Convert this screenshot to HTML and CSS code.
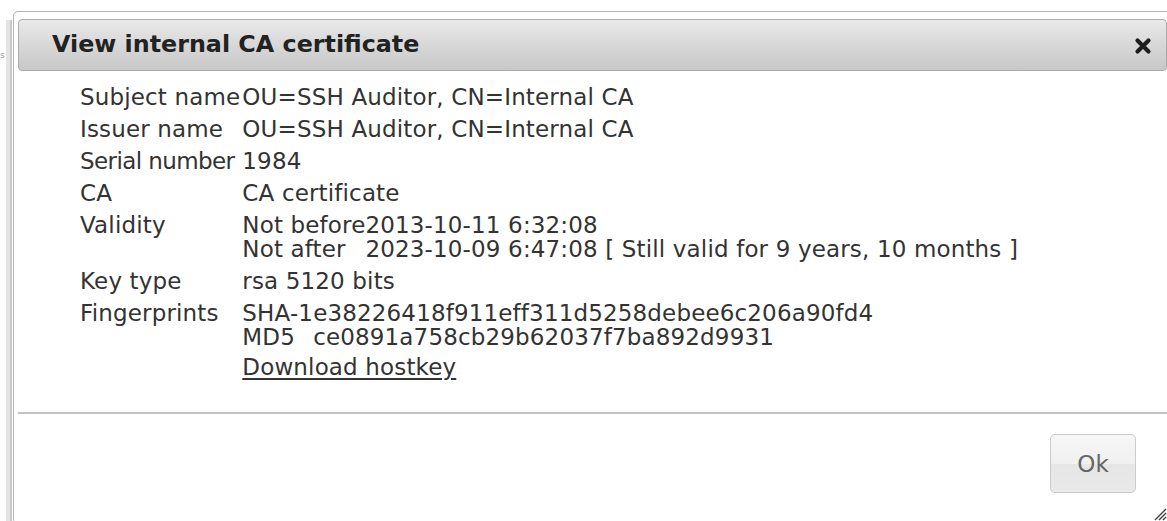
FILE: index.html
```html
<!DOCTYPE html>
<html lang="en">
<head>
<meta charset="utf-8">
<title>View internal CA certificate</title>
<link rel="stylesheet" href="styles.css">
</head>
<body>
<div class="backdrop">
  <span class="backdrop-text">s</span>
  <div class="backdrop-edge"></div>
</div>

<div class="dialog" role="dialog" aria-labelledby="dlg-title">
  <div class="titlebar">
    <span class="title" id="dlg-title">View internal CA certificate</span>
    <button class="close" type="button" aria-label="Close">
      <svg viewBox="0 0 18 18" width="18" height="18" aria-hidden="true">
        <path d="M3.5 3.5 L14.5 14.5 M14.5 3.5 L3.5 14.5" stroke="#1e1e1e" stroke-width="4.2" stroke-linecap="round"/>
      </svg>
    </button>
  </div>

  <div class="content">
    <table class="cert">
      <tr><th>Subject name</th><td>OU=SSH Auditor, CN=Internal CA</td></tr>
      <tr><th>Issuer name</th><td>OU=SSH Auditor, CN=Internal CA</td></tr>
      <tr><th><span class="tight">Serial number</span></th><td>1984</td></tr>
      <tr><th>CA</th><td>CA certificate</td></tr>
      <tr>
        <th>Validity</th>
        <td>
          <div class="pairs">
            <span>Not before</span><span>2013-10-11 6:32:08</span>
            <span>Not after</span><span>2023-10-09 6:47:08 [ Still valid for 9 years, 10 months ]</span>
          </div>
        </td>
      </tr>
      <tr><th>Key type</th><td>rsa 5120 bits</td></tr>
      <tr>
        <th>Fingerprints</th>
        <td>
          <div class="pairs">
            <span>SHA-1</span><span>e38226418f911eff311d5258debee6c206a90fd4</span>
            <span>MD5</span><span>ce0891a758cb29b62037f7ba892d9931</span>
          </div>
          <a class="download" href="#">Download hostkey</a>
        </td>
      </tr>
    </table>
  </div>

  <div class="buttonpane">
    <button class="btn" type="button">Ok</button>
  </div>

  <div class="grip" aria-hidden="true">
    <svg viewBox="0 0 16 16" width="16" height="16">
      <path d="M15 4 L4 15 M15 8 L8 15 M15 12 L12 15" stroke="#3f3f3f" stroke-width="1.4"/>
    </svg>
  </div>
</div>
</body>
</html>
```

FILE: styles.css
```css
html, body {
  margin: 0;
  padding: 0;
  background: #ffffff;
  height: 100%;
  overflow: hidden;
}

body {
  font-family: "DejaVu Sans", Verdana, sans-serif;
  color: #333333;
  position: relative;
}

/* page behind the modal, only its left edge peeks out */
.backdrop {
  position: absolute;
  left: 0;
  top: 0;
  bottom: 0;
  width: 13px;
  overflow: hidden;
}

.backdrop-text {
  position: absolute;
  left: 0;
  top: 50px;
  font-size: 9px;
  color: #9a9a9a;
}

.backdrop-edge {
  position: absolute;
  left: 6px;
  top: 20px;
  bottom: 0;
  width: 4px;
  background: #e4e4e4;
  border-right: 2px solid #c9c9c9;
}

/* modal window */
.dialog {
  position: absolute;
  left: 13px;
  top: 11px;
  right: -5px;
  bottom: -3px;
  background: #ffffff;
  border: 1px solid #b4b4b4;
  border-radius: 5px;
  padding: 7px 4px 0 4px;
  display: flex;
  flex-direction: column;
}

.titlebar {
  height: 50px;
  border: 1px solid #acacac;
  border-radius: 4px;
  background: linear-gradient(#e9e9e9, #d6d6d6 55%, #c8c8c8);
  display: flex;
  align-items: center;
  justify-content: space-between;
  padding: 0 14px 0 33px;
}

.title {
  font-weight: bold;
  font-size: 23.8px;
  color: #222222;
  line-height: 1;
}

.close {
  width: 18px;
  height: 18px;
  padding: 0;
  border: 0;
  background: transparent;
  display: flex;
  align-items: center;
  justify-content: center;
  margin-top: 2px;
}

.content {
  padding: 10px 0 29px 62px;
}

.cert {
  border-collapse: collapse;
  font-size: 23px;
  line-height: 24px;
  letter-spacing: 0.15px;
}

.cert th,
.cert td {
  padding: 4px 0;
  text-align: left;
  vertical-align: top;
  font-weight: normal;
  white-space: nowrap;
}

.cert td {
  padding-left: 2px;
}

.tight {
  letter-spacing: -0.6px;
}

.pairs {
  display: grid;
  grid-template-columns: auto auto;
  justify-content: start;
}

.download {
  display: block;
  margin-top: 6px;
  color: #333333;
  text-decoration: underline;
  text-underline-offset: 3px;
}

.buttonpane {
  border-top: 2px solid #c3c3c3;
  display: flex;
  justify-content: flex-end;
  align-items: flex-start;
  padding: 20px 31px 0 0;
  flex: 1;
}

.btn {
  width: 86px;
  height: 59px;
  border: 1px solid #cbcbcb;
  border-radius: 5px;
  background: linear-gradient(#f6f6f6, #f0f0f0 50%, #e6e6e6 51%, #e9e9e9);
  font-family: "DejaVu Sans", Verdana, sans-serif;
  font-size: 23px;
  color: #666666;
  padding: 0;
}

.grip {
  position: absolute;
  right: 4px;
  bottom: 2px;
  width: 16px;
  height: 16px;
}
```
